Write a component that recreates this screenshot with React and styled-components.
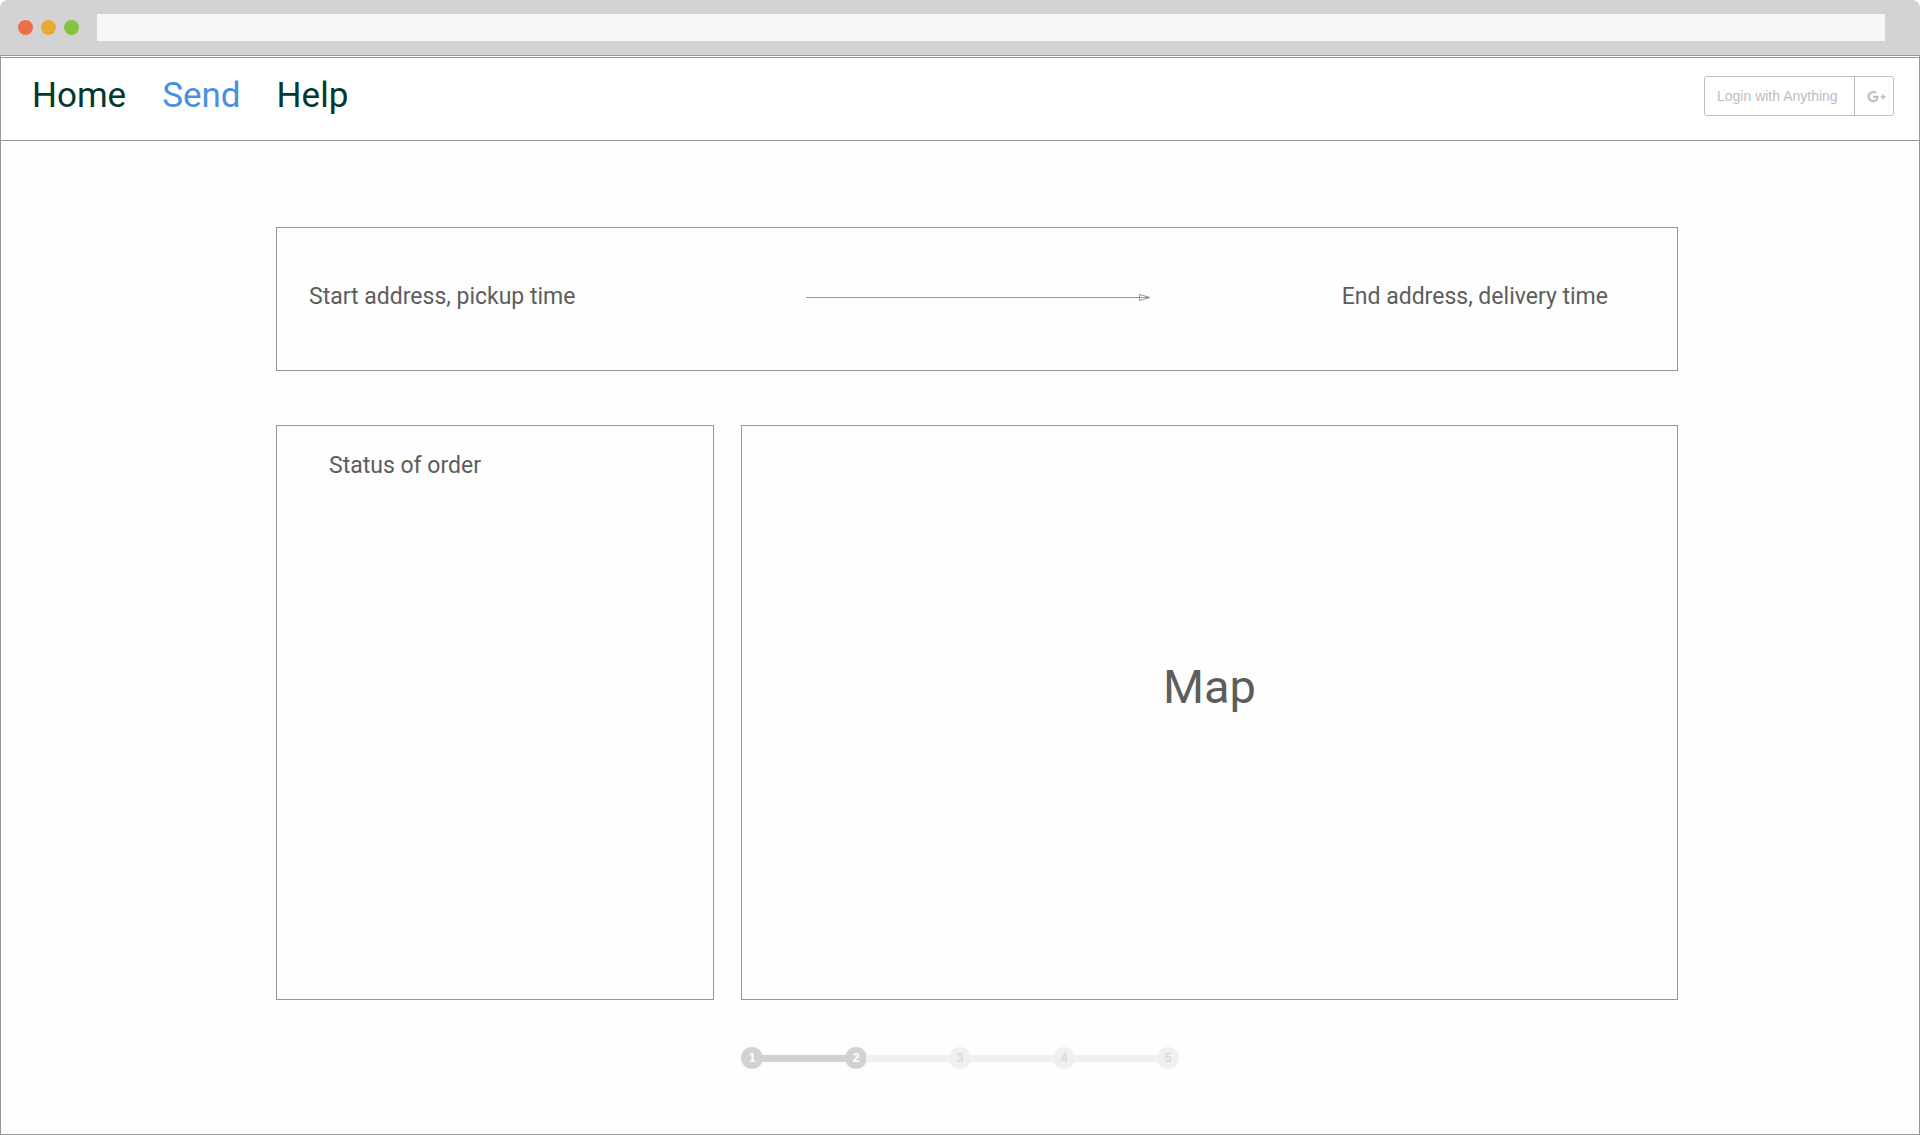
import React from "react";
import styled, { createGlobalStyle } from "styled-components";
import { FaGooglePlusG } from "react-icons/fa";

const line = "#979797";
const ink = "#5d5d5d";

const GlobalStyle = createGlobalStyle`
  *, *::before, *::after { box-sizing: border-box; }
  body {
    margin: 0;
    background: #fefefe;
    color: ${ink};
    font-family: Roboto, "Liberation Sans", sans-serif;
  }
`;

const Window = styled.div`
  display: flex;
  flex-direction: column;
  min-height: 100vh;
`;

const TitleBar = styled.div`
  display: flex;
  align-items: center;
  height: 55px;
  padding: 0 35px 0 18px;
  background: #d3d3d3;
  border-radius: 8px 8px 0 0;
`;

const Dots = styled.div`
  display: flex;
  gap: 8px;
  margin-right: 18px;
`;

const Dot = styled.button`
  width: 15px;
  height: 15px;
  padding: 0;
  border: 0;
  border-radius: 50%;
  background: ${(p) => p.$color};
`;

const Address = styled.input`
  flex: 1;
  min-width: 0;
  height: 27px;
  padding: 0 8px;
  border: 0;
  border-radius: 0;
  background: #f7f7f7;
  font: 14px "Liberation Sans", sans-serif;
`;

const Page = styled.div`
  flex: 1;
  display: flex;
  flex-direction: column;
  padding-top: 1px;
  border: 1px solid ${line};
`;

const Header = styled.header`
  display: flex;
  align-items: center;
  justify-content: space-between;
  flex: none;
  height: 84px;
  padding: 0 25px 6px 31px;
  border-top: 1px solid ${line};
  border-bottom: 1px solid ${line};
  background: #ffffff;
`;

const Nav = styled.nav`
  display: flex;
  gap: 36px;
`;

const NavLink = styled.a`
  color: ${(p) => (p.$active ? "#4a90e2" : "#04382e")};
  font-size: 35px;
  line-height: 44px;
  text-decoration: none;
`;

const LoginButton = styled.button`
  display: flex;
  align-items: stretch;
  height: 40px;
  padding: 0;
  border: 1px solid #bbbdbf;
  border-radius: 3px;
  background: transparent;
  color: #bbbdbf;
  font: 14px "Liberation Sans", sans-serif;
`;

const LoginLabel = styled.span`
  display: flex;
  align-items: center;
  width: 149px;
  padding-left: 12px;
  white-space: nowrap;
`;

const LoginIcon = styled.span`
  display: flex;
  align-items: center;
  width: 39px;
  padding-left: 12px;
  border-left: 1px solid #bbbdbf;

  svg { width: 19px; height: 15px; }
`;

const Main = styled.main`
  flex: 1;
  display: grid;
  grid-template-columns: 438fr 937fr;
  grid-template-rows: auto 1fr auto;
  column-gap: 27px;
  padding: 86px 241px 65px 275px;
`;

const Card = styled.section`
  border: 1px solid ${line};
`;

const Route = styled(Card)`
  grid-column: 1 / -1;
  display: flex;
  align-items: center;
  justify-content: space-between;
  height: 144px;
  margin-bottom: 54px;
  padding: 0 69px 4px 32px;
`;

const Label = styled.p`
  margin: 0;
  font-size: 23px;
  line-height: 30px;
  white-space: nowrap;
`;

const Arrow = styled.svg`
  width: 345px;
  height: 9px;
  margin-left: 40px;
  fill: none;
  stroke: ${line};
`;

const StatusCard = styled(Card)`
  padding: 25px 52px;
`;

const MapCard = styled(Card)`
  display: flex;
  align-items: center;
  justify-content: center;
  min-height: 240px;
  padding-bottom: 52px;
`;

const MapTitle = styled.h2`
  margin: 0;
  font-size: 47px;
  font-weight: 400;
  line-height: 60px;
`;

const Steps = styled.ol`
  grid-column: 2;
  display: flex;
  align-items: center;
  width: 438px;
  margin: 47px 0 0;
  padding: 0;
  list-style: none;
`;

const Step = styled.li`
  display: flex;
  align-items: center;
  flex: ${(p) => (p.$first ? "none" : 1)};

  &::before {
    content: "";
    display: ${(p) => (p.$first ? "none" : "block")};
    flex: 1;
    height: 7px;
    margin: 0 -1px;
    background: ${(p) => (p.$done ? "#d1d2d4" : "#f0f0f0")};
  }
`;

const StepDot = styled.span`
  width: 22px;
  height: 22px;
  border-radius: 50%;
  background: ${(p) => (p.$done ? "#d1d2d4" : "#f0f0f0")};
  color: ${(p) => (p.$done ? "#ffffff" : "#d8d9da")};
  font: bold 13px/22px "Liberation Sans", sans-serif;
  text-align: center;
`;

const links = ["Home", "Send", "Help"];
const steps = [1, 2, 3, 4, 5];
const currentStep = 2;

export default function App() {
  return (
    <Window>
      <GlobalStyle />
      <TitleBar>
        <Dots>
          <Dot type="button" aria-label="Close" $color="#eb6f4b" />
          <Dot type="button" aria-label="Minimize" $color="#e7a935" />
          <Dot type="button" aria-label="Maximize" $color="#86c440" />
        </Dots>
        <Address type="text" aria-label="Address" />
      </TitleBar>
      <Page>
        <Header>
          <Nav>
            {links.map((name) => (
              <NavLink key={name} href={`#${name.toLowerCase()}`} $active={name === "Send"}>
                {name}
              </NavLink>
            ))}
          </Nav>
          <LoginButton type="button">
            <LoginLabel>Login with Anything</LoginLabel>
            <LoginIcon>
              <FaGooglePlusG aria-hidden="true" />
            </LoginIcon>
          </LoginButton>
        </Header>
        <Main>
          <Route>
            <Label>Start address, pickup time</Label>
            <Arrow viewBox="0 0 345 9" aria-hidden="true">
              <path d="M0 4.5H344M333.5 1.5L344 4.5L333.5 7.5Z" />
            </Arrow>
            <Label>End address, delivery time</Label>
          </Route>
          <StatusCard>
            <Label>Status of order</Label>
          </StatusCard>
          <MapCard>
            <MapTitle>Map</MapTitle>
          </MapCard>
          <Steps>
            {steps.map((n) => (
              <Step key={n} $first={n === 1} $done={n <= currentStep}>
                <StepDot $done={n <= currentStep}>{n}</StepDot>
              </Step>
            ))}
          </Steps>
        </Main>
      </Page>
    </Window>
  );
}
